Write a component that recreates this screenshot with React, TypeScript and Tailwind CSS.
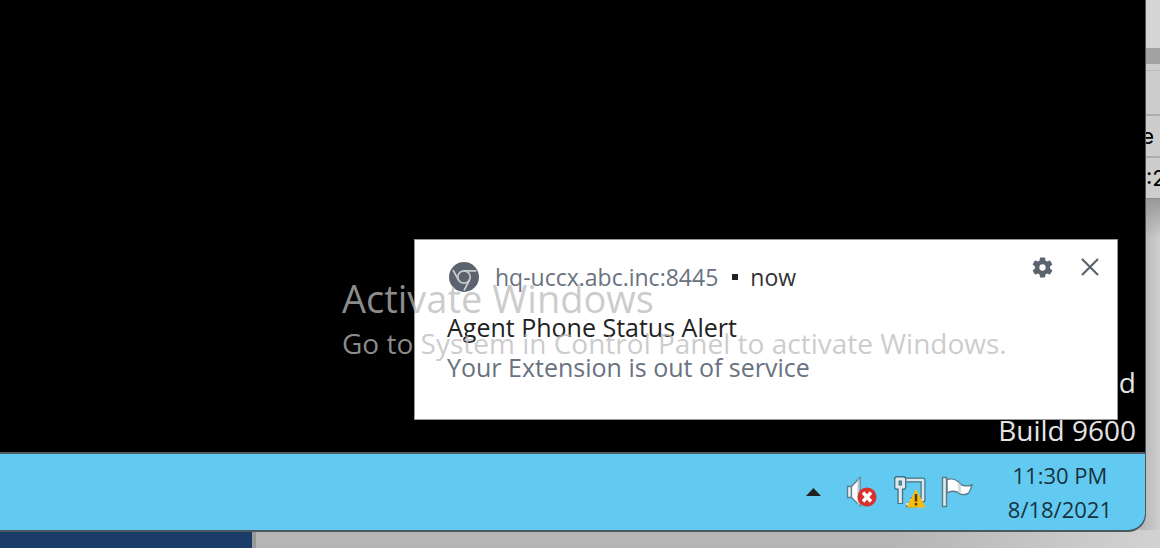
import type { ReactNode } from "react";

function ChromeMark() {
  return (
    <svg viewBox="0 0 30 30" className="size-[30px] shrink-0" aria-hidden="true">
      <circle cx="15" cy="15" r="15" fill="#5b636e" />
      <g fill="none" stroke="#c9cbcf" strokeWidth="1.7">
        <circle cx="15" cy="15" r="6.2" />
        <path d="M15 8.8H27.5M9.5 18L4 8M20.5 18L15 28.5" />
      </g>
      <circle cx="15" cy="15" r="4.2" fill="#5b636e" />
    </svg>
  );
}

function GearIcon() {
  return (
    <svg viewBox="2 2 20 20" className="size-[21px]" aria-hidden="true">
      <path
        fill="#5b636e"
        d="M19.14 12.94c.04-.3.06-.61.06-.94 0-.32-.02-.64-.07-.94l2.03-1.58a.49.49 0 0 0 .12-.61l-1.92-3.32a.49.49 0 0 0-.59-.22l-2.39.96c-.5-.38-1.03-.7-1.62-.94l-.36-2.54a.48.48 0 0 0-.48-.41h-3.84a.47.47 0 0 0-.47.41l-.36 2.54c-.59.24-1.13.57-1.62.94l-2.39-.96a.48.48 0 0 0-.59.22L2.74 8.87a.47.47 0 0 0 .12.61l2.03 1.58c-.05.3-.09.63-.09.94s.02.64.07.94l-2.03 1.58a.49.49 0 0 0-.12.61l1.92 3.32c.12.22.37.29.59.22l2.39-.96c.5.38 1.03.7 1.62.94l.36 2.54c.05.24.24.41.48.41h3.84c.24 0 .44-.17.47-.41l.36-2.54c.59-.24 1.13-.56 1.62-.94l2.39.96c.22.08.47 0 .59-.22l1.92-3.32a.47.47 0 0 0-.12-.61zM12 15a3 3 0 1 1 0-6 3 3 0 0 1 0 6z"
      />
    </svg>
  );
}

function CloseIcon() {
  return (
    <svg viewBox="0 0 18 18" className="size-[18px]" aria-hidden="true">
      <path d="M1 1L17 17M17 1L1 17" stroke="#5b636e" strokeWidth="2.2" />
    </svg>
  );
}

function VolumeMutedIcon() {
  return (
    <svg viewBox="0 0 34 34" className="size-[34px]" aria-hidden="true">
      <path d="M2.5 11.5H6.5V22.5H2.5Z" fill="#e6eaec" stroke="#5b7c89" strokeWidth="1.3" />
      <path d="M6.5 11.5L15 2.5V31L6.5 22.5Z" fill="#fff" stroke="#5b7c89" strokeWidth="1.3" />
      <path d="M12.5 5.5V29L14.5 31V3Z" fill="#bcc8cc" />
      <circle cx="22" cy="22" r="9.5" fill="#d9302c" />
      <path d="M18 17.5L26 26.5M26 17.5L18 26.5" stroke="#fff" strokeWidth="3.4" />
    </svg>
  );
}

function NetworkWarningIcon() {
  return (
    <svg viewBox="0 0 34 34" className="size-[34px]" aria-hidden="true">
      <g fill="none" strokeLinejoin="round">
        <path d="M12 5H30V25H17M13 30H24M20 25V30" stroke="#3f7286" strokeWidth="5" />
        <path d="M12 5H30V25H17M13 29H24" stroke="#dce5e8" strokeWidth="2.6" />
        <path d="M4 4H10.5V12H4ZM7.3 12V29" stroke="#3f7286" strokeWidth="5.8" />
        <path d="M4 4H10.5V12H4ZM7.3 12V28" stroke="#e2e8ea" strokeWidth="3.2" />
      </g>
      <path d="M23 14L32.5 32.5H13.5Z" fill="#f9bc0b" />
      <path d="M23 19V26.5M23 28V30.5" stroke="#493c13" strokeWidth="2.4" />
    </svg>
  );
}

function FlagIcon() {
  return (
    <svg viewBox="0 0 34 34" className="size-[34px]" aria-hidden="true">
      <path
        d="M6 4.5C11 3 14 4 17 6.5C19 8 19 9.5 21 10C25 11.500 28 11 31 10C30 13 29 17 27 18.500C23 20.500 19 19.500 16 17C13 16 9 16 6 18Z"
        fill="#fff"
        stroke="#5b7c89"
        strokeWidth="1.4"
      />
      <path d="M17 7V17L20 19V10Z" fill="#d3dcdf" />
      <path d="M1.500 2.500H5.500V31.500H1.500Z" fill="#e3eaec" stroke="#5b7c89" strokeWidth="1.4" />
    </svg>
  );
}

function TrayButton({ label, children }: { label: string; children: ReactNode }) {
  return (
    <button type="button" aria-label={label} className="flex items-center">
      {children}
    </button>
  );
}

function HostDesktop() {
  return (
    <div className="absolute inset-0 flex flex-col bg-[#c6c6c6]">
      <div className="flex flex-1 justify-end">
        <div className="w-5 bg-linear-to-r from-[#b4b4b4] to-[#cecece] text-right font-[Inter,sans-serif] text-[22px] leading-[40px] text-black">
          <div className="h-12 bg-[#d5d5d5]" />
          <div className="h-4 bg-[#a2a2a2]" />
          <div className="h-[52px] border-b-2 border-[#adadad] bg-[#cdcdcd] pt-[6px]">
            <div className="h-px bg-[#b8b8b8]" />
          </div>
          <div className="h-[42px] border-b-2 border-[#adadad] bg-[#cdcdcd] pr-[6px]">e</div>
          <div className="flex h-[41px] justify-start overflow-hidden border-b border-[#8e8e8e] bg-[#cdcdcd] pl-[6px]">:2</div>
          <div className="h-10 bg-linear-to-b from-[#999] to-transparent" />
        </div>
      </div>
      <div className="flex h-[18px]">
        <div className="w-[252px] bg-[#1b3c69]" />
        <div className="flex-1 border-l-4 border-[#989898] bg-linear-to-r from-[#b5b5b5] from-70% to-[#d2d2d2]" />
      </div>
    </div>
  );
}

function Notification() {
  return (
    <section
      aria-label="Notification"
      className="absolute right-[27px] bottom-8 w-[704px] border border-[#999] bg-white pt-[21px] pr-[18px] pb-8 pl-8 text-[25px]"
    >
      <header className="flex h-8 items-center pl-[2px] text-[23px]">
        <ChromeMark />
        <span className="ml-4 text-[#697280]">hq-uccx.abc.inc:8445</span>
        <span className="ml-[14px] size-[6px] bg-[#222]" />
        <span className="ml-3 text-[#333]">now</span>
        <div className="mb-5 ml-auto flex items-center gap-7">
          <button type="button" aria-label="Notification settings">
            <GearIcon />
          </button>
          <button type="button" aria-label="Close">
            <CloseIcon />
          </button>
        </div>
      </header>
      <h1 className="mt-[14px] leading-10 text-[#222]">Agent Phone Status Alert</h1>
      <p className="leading-10 text-[#697280]">Your Extension is out of service</p>
    </section>
  );
}

export default function App() {
  return (
    <main className="relative flex min-h-screen flex-col pr-[14px] pb-4 font-['Open_Sans',sans-serif]">
      <HostDesktop />
      <div className="relative flex flex-1 flex-col overflow-hidden rounded-br-[18px] border-r border-b-2 border-[#4b5860] bg-black">
        <div className="relative flex flex-1 flex-col items-end justify-end pr-[9px] text-[28px] leading-[48px] text-[#e4e4e4]">
          <span>d</span>
          <span className="-mb-[2px]">Build 9600</span>
          <Notification />
          <div className="absolute right-[125px] bottom-[87px] w-[678px] whitespace-nowrap text-[#bbb]/75">
            <div className="text-[38px] leading-[46px]">Activate Windows</div>
            <div className="text-[28px] leading-[44px]">Go to System in Control Panel to activate Windows.</div>
          </div>
        </div>
        <footer className="flex h-[78px] items-center justify-end border-t-2 border-[#515b61] bg-[#62caf0] pr-[33px]">
          <div className="flex items-center gap-[14px]">
            <button type="button" aria-label="Show hidden icons" className="mr-[10px]">
              <svg viewBox="0 0 15 8" className="h-2 w-[15px]" aria-hidden="true">
                <path d="M7.5 0L15 8H0Z" fill="#222" />
              </svg>
            </button>
            <TrayButton label="Volume muted">
              <VolumeMutedIcon />
            </TrayButton>
            <TrayButton label="Network warning">
              <NetworkWarningIcon />
            </TrayButton>
            <TrayButton label="Action center">
              <FlagIcon />
            </TrayButton>
          </div>
          <button type="button" className="ml-[33px] text-center text-[22px] leading-[34px] text-[#18333e]">
            <span className="block">11:30 PM</span>
            <span className="block">8/18/2021</span>
          </button>
        </footer>
      </div>
    </main>
  );
}
